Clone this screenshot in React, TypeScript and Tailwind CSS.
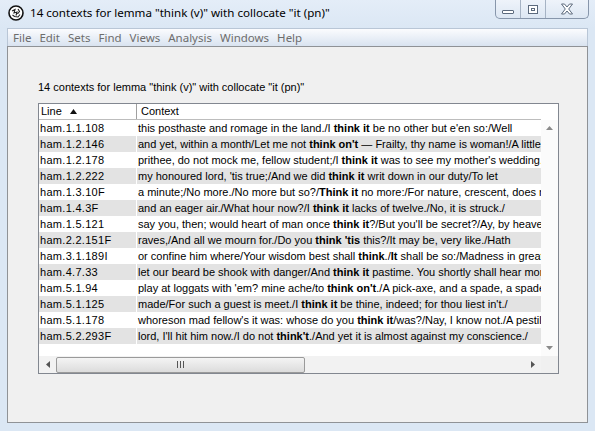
import React from "react";

type Seg = { t: string; b?: boolean };
const rows: { line: string; ctx: Seg[] }[] = [
  { line: "ham.1.1.108", ctx: [{ t: "this posthaste and romage in the land./I " }, { t: "think it", b: true }, { t: " be no other but e'en so:/Well" }] },
  { line: "ham.1.2.146", ctx: [{ t: "and yet, within a month/Let me not " }, { t: "think on't", b: true }, { t: " \u2014 Frailty, thy name is woman!/A little month, or ere those shoes were old" }] },
  { line: "ham.1.2.178", ctx: [{ t: "prithee, do not mock me, fellow student;/I " }, { t: "think it", b: true }, { t: " was to see my mother's wedding." }] },
  { line: "ham.1.2.222", ctx: [{ t: "my honoured lord, 'tis true;/And we did " }, { t: "think it", b: true }, { t: " writ down in our duty/To let" }] },
  { line: "ham.1.3.10F", ctx: [{ t: "a minute;/No more./No more but so?/" }, { t: "Think it", b: true }, { t: " no more:/For nature, crescent, does not grow alone" }] },
  { line: "ham.1.4.3F", ctx: [{ t: "and an eager air./What hour now?/I " }, { t: "think it", b: true }, { t: " lacks of twelve./No, it is struck./" }] },
  { line: "ham.1.5.121", ctx: [{ t: "say you, then; would heart of man once " }, { t: "think it", b: true }, { t: "?/But you'll be secret?/Ay, by heaven, my lord." }] },
  { line: "ham.2.2.151F", ctx: [{ t: "raves,/And all we mourn for./Do you " }, { t: "think 'tis", b: true }, { t: " this?/It may be, very like./Hath" }] },
  { line: "ham.3.1.189I", ctx: [{ t: "or confine him where/Your wisdom best shall " }, { t: "think", b: true }, { t: "./" }, { t: "It", b: true }, { t: " shall be so:/Madness in great ones must not unwatch'd go." }] },
  { line: "ham.4.7.33", ctx: [{ t: "let our beard be shook with danger/And " }, { t: "think it", b: true }, { t: " pastime. You shortly shall hear more:" }] },
  { line: "ham.5.1.94", ctx: [{ t: "play at loggats with 'em? mine ache/to " }, { t: "think on't", b: true }, { t: "./A pick-axe, and a spade, a spade," }] },
  { line: "ham.5.1.125", ctx: [{ t: "made/For such a guest is meet./I " }, { t: "think it", b: true }, { t: " be thine, indeed; for thou liest in't./" }] },
  { line: "ham.5.1.178", ctx: [{ t: "whoreson mad fellow's it was: whose do you " }, { t: "think it", b: true }, { t: "/was?/Nay, I know not./A pestilence on him" }] },
  { line: "ham.5.2.293F", ctx: [{ t: "lord, I'll hit him now./I do not " }, { t: "think't", b: true }, { t: "./And yet it is almost against my conscience./" }] },
];

const menus = ["File", "Edit", "Sets", "Find", "Views", "Analysis", "Windows", "Help"];

function AppIcon() {
  return (
    <svg width="16" height="16" viewBox="0 0 16 16">
      <circle cx="8" cy="8" r="7" fill="#fff" stroke="#111" strokeWidth="1.6" />
      <path d="M4 6 L7 4.5 L6 8 L9 7 L8 10.5 M10 4 L11.5 6.5 L9.5 9 M4.5 10 L6.5 11.5 L10 12 L12 9.5" fill="none" stroke="#222" strokeWidth="1.1" />
    </svg>
  );
}

export default function App() {
  return (
    <div className="w-[595px] h-[431px] bg-[#dbe7f4] flex flex-col overflow-hidden" style={{ fontFamily: '"Liberation Sans", Arial, sans-serif' }}>
      {/* Title bar */}
      <div className="h-[28px] flex items-start bg-gradient-to-b from-[#e4edf8] to-[#dbe7f4]">
        <div className="flex items-center gap-[6px] pl-[8px] pt-[5px]">
          <AppIcon />
          <span className="text-[11.6px] text-black leading-[16px]" style={{ fontFamily: '"Noto Sans", sans-serif' }}>14 contexts for lemma "think (v)" with collocate "it (pn)"</span>
        </div>
        <div className="ml-auto mr-[6px] flex h-[19px] border border-t-0 border-[#8796ab] rounded-b-[5px] overflow-hidden bg-gradient-to-b from-[#eef3fa] to-[#dde7f3]">
          <div className="w-[25px] flex items-center justify-center border-r border-[#a6b3c4]">
            <div className="w-[12px] h-[4px] mt-[5px] border border-[#5c6a7d] rounded-[1px] bg-white" />
          </div>
          <div className="w-[25px] flex items-center justify-center border-r border-[#a6b3c4]">
            <div className="w-[10px] h-[9px] border border-[#5c6a7d] flex items-center justify-center bg-white">
              <div className="w-[4px] h-[3px] border border-[#5c6a7d]" />
            </div>
          </div>
          <div className="w-[42px] flex items-center justify-center">
            <svg width="14" height="12" viewBox="0 0 14 12">
              <path d="M1.5 1 H4.5 L7 4 L9.5 1 H12.5 L8.7 6 L12.5 11 H9.5 L7 8 L4.5 11 H1.5 L5.3 6 Z" fill="#fff" stroke="#5c6a7d" strokeWidth="1" strokeLinejoin="round" />
            </svg>
          </div>
        </div>
      </div>

      {/* Menu bar */}
      <div className="mx-[7px] h-[18px] flex items-center gap-[8px] pl-[5px] border border-b-0 border-[#b9c6d6] bg-gradient-to-b from-[#fbfcfe] to-[#d9e3f0] text-[11.5px] text-[#6d6d6d]" style={{ fontFamily: '"Noto Sans", sans-serif' }}>
        {menus.map((m) => (
          <span key={m} className="leading-[16px]">{m}</span>
        ))}
      </div>

      {/* Client */}
      <div className="mx-[7px] flex-1 bg-[#f0f0f0] border border-[#8f9296] pl-[30px] pt-[34px]">
        <div className="text-[11px] leading-[13px] text-black h-[13px]">14 contexts for lemma "think (v)" with collocate "it (pn)"</div>
        <div className="mt-[9px] w-[521px] h-[271px] border border-[#828790] bg-white flex flex-col text-[11px] text-black">
          {/* Header */}
          <div className="h-[16px] flex">
            <div className="w-[502px] flex border-b border-[#bdbdbd]">
              <div className="w-[98px] flex items-center pl-[2px] border-r border-[#a0a0a0] gap-[8px]">
                <span className="leading-[15px]">Line</span>
                <svg width="7" height="5" viewBox="0 0 7 5"><path d="M3.5 0 L7 5 H0 Z" fill="#111" /></svg>
              </div>
              <div className="flex-1 flex items-center pl-[4px]">
                <span className="leading-[15px]">Context</span>
              </div>
            </div>
            <div className="flex-1 bg-white" />
          </div>
          {/* Body */}
          <div className="flex h-[236px]">
            <div className="w-[502px] overflow-hidden">
              {rows.map((r, i) => (
                <div key={r.line} className="h-[16px] flex">
                  <div className={`w-[97px] pl-[1px] leading-[16px] tracking-[0.3px] whitespace-nowrap overflow-hidden ${i % 2 === 1 ? "bg-[#e3e3e3]" : "bg-white"}`}>{r.line}</div>
                  <div className="w-[1px] bg-white" />
                  <div className={`flex-1 pl-[1px] leading-[16px] whitespace-nowrap overflow-hidden ${i % 2 === 1 ? "bg-[#e3e3e3]" : "bg-white"}`}>
                    {r.ctx.map((s, j) => (
                      <span key={j} className={s.b ? "font-bold" : ""}>{s.t}</span>
                    ))}
                  </div>
                </div>
              ))}
            </div>
            <div className="flex-1 flex flex-col items-center justify-between bg-[#fbfbfb] py-[6px]">
              <svg width="7" height="4" viewBox="0 0 7 4"><path d="M3.5 0 L7 4 H0 Z" fill="#8a8a8a" /></svg>
              <svg width="7" height="4" viewBox="0 0 7 4"><path d="M0 0 H7 L3.5 4 Z" fill="#8a8a8a" /></svg>
            </div>
          </div>
          {/* Horizontal scrollbar */}
          <div className="h-[17px] flex">
            <div className="w-[502px] flex items-center bg-[#f2f2f2]">
              <div className="w-[17px] h-[17px] flex items-center justify-center">
                <svg width="4" height="7" viewBox="0 0 4 7"><path d="M4 0 V7 L0 3.5 Z" fill="#555" /></svg>
              </div>
              <div className="w-[249px] h-[16px] rounded-[2px] border border-[#9a9a9a] bg-gradient-to-b from-[#f4f4f4] to-[#dcdcdc] flex items-center justify-center">
                <div className="flex gap-[2px]">
                  <div className="w-[1px] h-[7px] bg-[#555]" />
                  <div className="w-[1px] h-[7px] bg-[#555]" />
                  <div className="w-[1px] h-[7px] bg-[#555]" />
                </div>
              </div>
              <div className="ml-auto w-[17px] h-[17px] flex items-center justify-center">
                <svg width="4" height="7" viewBox="0 0 4 7"><path d="M0 0 V7 L4 3.5 Z" fill="#555" /></svg>
              </div>
            </div>
            <div className="flex-1 bg-[#f0f0f0]" />
          </div>
        </div>
      </div>
      <div className="h-[8px]" />
    </div>
  );
}
